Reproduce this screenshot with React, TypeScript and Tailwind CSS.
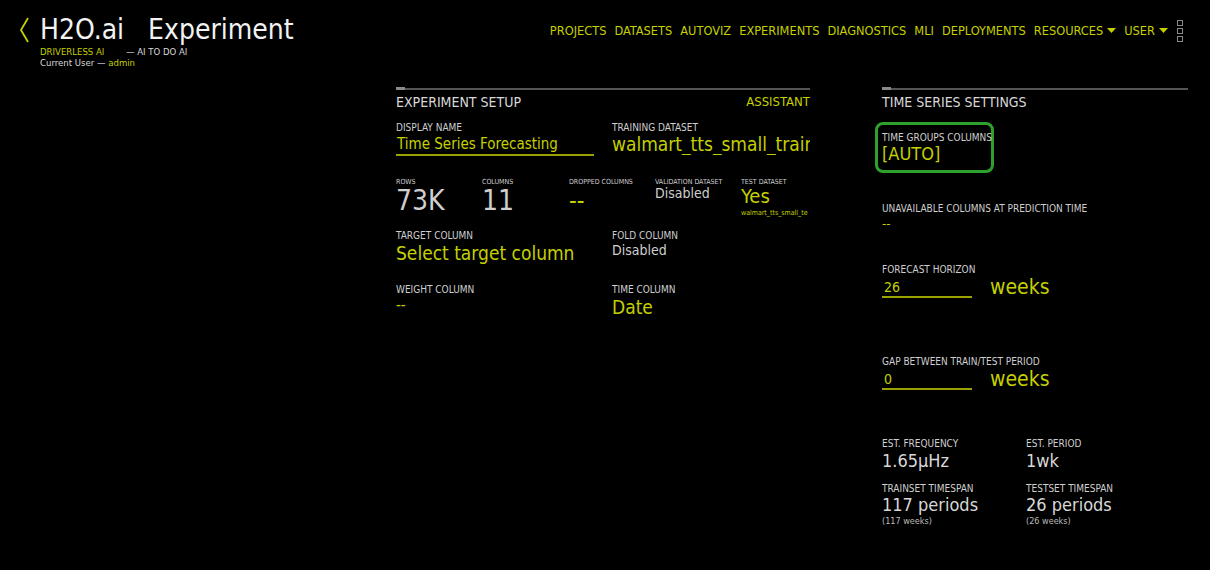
import React from "react";

const Y = "text-[#c4d000]";
const F = "font-['Liberation_Sans_Narrow','DejaVu_Sans_Condensed','Roboto',sans-serif]";

function Label({ children, tiny }: { children: React.ReactNode; tiny?: boolean }) {
  return (
    <div className={`${tiny ? "text-[7px] h-[8px] leading-[8px]" : "text-[10px] h-[11px] leading-[11px]"} uppercase text-[#cfcfcf] whitespace-nowrap`}>
      {children}
    </div>
  );
}

function SectionHead({ title, right }: { title: string; right?: string }) {
  return (
    <div>
      <div className="relative h-[2px] bg-[#555]">
        <div className="absolute left-0 -top-[1px] h-[3px] w-[9px] bg-[#8a8a8a]" />
      </div>
      <div className="flex justify-between items-center mt-[4px] h-[16px]">
        <div className="text-[14px] leading-[16px] text-[#d8d8d8]">{title}</div>
        {right && <div className={`text-[13px] leading-[16px] ${Y}`}>{right}</div>}
      </div>
    </div>
  );
}

function Caret() {
  return (
    <svg width="9" height="6" viewBox="0 0 9 6">
      <path d="M0 0 H9 L4.5 5 Z" fill="#c4d000" />
    </svg>
  );
}

function WeeksInput({ value }: { value: string }) {
  return (
    <div className="flex items-start mt-[3px]">
      <div className={`w-[90px] border-b-2 border-[#9aa300] text-[14px] leading-[18px] ${Y} pl-[2px]`}>{value}</div>
      <div className={`ml-[18px] text-[21px] leading-[18px] ${Y} font-light`}>weeks</div>
    </div>
  );
}

export default function App() {
  const nav = ["PROJECTS", "DATASETS", "AUTOVIZ", "EXPERIMENTS", "DIAGNOSTICS", "MLI", "DEPLOYMENTS"];
  return (
    <div className={`w-[1210px] h-[570px] bg-black overflow-hidden ${F}`}>
      {/* header */}
      <div className="flex items-start h-[86px]">
        <div className="flex items-start pl-[18px] pt-[15px]">
          <svg width="14" height="28" viewBox="0 0 14 28" className="mt-[1px]">
            <path d="M10 2 L3 14 L10 26" stroke="#c4d000" strokeWidth="1.8" fill="none" />
          </svg>
          <div className="ml-[8px]">
            <div className="text-[28px] leading-[30px] text-[#f2f2f2] font-light">
              H2O.ai<span className="ml-[24px]">Experiment</span>
            </div>
            <div className="text-[9.5px] leading-[11px] mt-[1px] flex">
              <span className={`${Y} w-[86px]`}>DRIVERLESS AI</span>
              <span className="text-[#d8d8d8]">— AI TO DO AI</span>
            </div>
            <div className="text-[9.5px] leading-[11px] text-[#d8d8d8]">
              Current User — <span className={Y}>admin</span>
            </div>
          </div>
        </div>
        <div className="ml-auto flex items-center pt-[20px] pr-[27px]">
          <div className={`flex items-center gap-[8px] text-[12.7px] leading-[18px] ${Y}`}>
            {nav.map((n) => (
              <span key={n}>{n}</span>
            ))}
            <span className="flex items-center gap-[4px]">
              RESOURCES
              <Caret />
            </span>
            <span className="flex items-center gap-[4px]">
              USER
              <Caret />
            </span>
          </div>
          <div className="ml-[9px] flex flex-col gap-[2px]">
            <div className="w-[6px] h-[6px] border border-[#888]" />
            <div className="w-[6px] h-[6px] border border-[#888]" />
            <div className="w-[6px] h-[6px] border border-[#888]" />
          </div>
        </div>
      </div>

      {/* content */}
      <div className="flex pl-[396px] pt-[2px]">
        {/* left panel */}
        <div className="w-[414px]">
          <SectionHead title="EXPERIMENT SETUP" right="ASSISTANT" />
          <div className="grid grid-cols-[216px_198px] mt-[12px]">
            <div>
              <Label>Display Name</Label>
              <div className={`text-[15px] ${Y} mt-[1px] w-[198px] border-b-2 border-[#9aa300] leading-[20px] pl-[1px]`}>
                Time Series Forecasting
              </div>
            </div>
            <div>
              <Label>Training Dataset</Label>
              <div className={`text-[19px] ${Y} leading-[22px] whitespace-nowrap overflow-hidden`}>
                walmart_tts_small_train
              </div>
            </div>
          </div>
          <div className="grid grid-cols-[86px_87px_86px_86px_69px] mt-[22px]">
            <div>
              <Label tiny>Rows</Label>
              <div className="text-[28px] leading-[32px] text-[#cfcfcf] font-light -mt-[1px]">73K</div>
            </div>
            <div>
              <Label tiny>Columns</Label>
              <div className="text-[28px] leading-[32px] text-[#cfcfcf] font-light -mt-[1px]">11</div>
            </div>
            <div>
              <Label tiny>Dropped Columns</Label>
              <div className={`text-[24px] leading-[30px] ${Y}`}>--</div>
            </div>
            <div>
              <Label tiny>Validation Dataset</Label>
              <div className="text-[14px] leading-[16px] text-[#cfcfcf] -mt-[1px]">Disabled</div>
            </div>
            <div className="overflow-hidden">
              <Label tiny>Test Dataset</Label>
              <div className={`text-[20px] leading-[22px] ${Y} -mt-[1px]`}>Yes</div>
              <div className={`text-[7px] leading-[8px] ${Y} whitespace-nowrap overflow-hidden mt-[2px]`}>walmart_tts_small_te</div>
            </div>
          </div>
          <div className="grid grid-cols-[216px_198px] mt-[13px]">
            <div>
              <Label>Target Column</Label>
              <div className={`text-[19px] leading-[24px] ${Y}`}>Select target column</div>
            </div>
            <div>
              <Label>Fold Column</Label>
              <div className="text-[14px] leading-[18px] text-[#cfcfcf]">Disabled</div>
            </div>
          </div>
          <div className="grid grid-cols-[216px_198px] mt-[19px]">
            <div>
              <Label>Weight Column</Label>
              <div className={`text-[15px] leading-[20px] ${Y}`}>--</div>
            </div>
            <div>
              <Label>Time Column</Label>
              <div className={`text-[19px] leading-[24px] ${Y}`}>Date</div>
            </div>
          </div>
        </div>

        {/* right panel */}
        <div className="w-[306px] ml-[72px]">
          <SectionHead title="TIME SERIES SETTINGS" />
          <div className="mt-[12px] -ml-[7px] w-[119px] h-[51px] rounded-[8px] border-[3px] border-[#2ea02e] pl-[4px] pt-[7px]">
            <Label>Time Groups Columns</Label>
            <div className={`text-[18px] leading-[22px] ${Y} font-light`}>[AUTO]</div>
          </div>
          <div className="mt-[30px]">
            <Label>Unavailable Columns at Prediction Time</Label>
            <div className={`text-[13px] leading-[16px] ${Y} mt-[2px]`}>--</div>
          </div>
          <div className="mt-[32px]">
            <Label>Forecast Horizon</Label>
            <WeeksInput value="26" />
          </div>
          <div className="mt-[58px]">
            <Label>Gap Between Train/Test Period</Label>
            <WeeksInput value="0" />
          </div>
          <div className="grid grid-cols-[144px_162px] mt-[48px]">
            <div>
              <Label>Est. Frequency</Label>
              <div className="text-[18px] leading-[24px] text-[#d8d8d8] font-light">1.65µHz</div>
            </div>
            <div>
              <Label>Est. Period</Label>
              <div className="text-[18px] leading-[24px] text-[#d8d8d8] font-light">1wk</div>
            </div>
          </div>
          <div className="grid grid-cols-[144px_162px] mt-[10px]">
            <div>
              <Label>Trainset Timespan</Label>
              <div className="text-[18px] leading-[24px] text-[#d8d8d8] font-light -mt-[1px]">117 periods</div>
              <div className="text-[9px] leading-[10px] text-[#bbb] -mt-[1px]">(117 weeks)</div>
            </div>
            <div>
              <Label>Testset Timespan</Label>
              <div className="text-[18px] leading-[24px] text-[#d8d8d8] font-light -mt-[1px]">26 periods</div>
              <div className="text-[9px] leading-[10px] text-[#bbb] -mt-[1px]">(26 weeks)</div>
            </div>
          </div>
        </div>
      </div>
    </div>
  );
}
